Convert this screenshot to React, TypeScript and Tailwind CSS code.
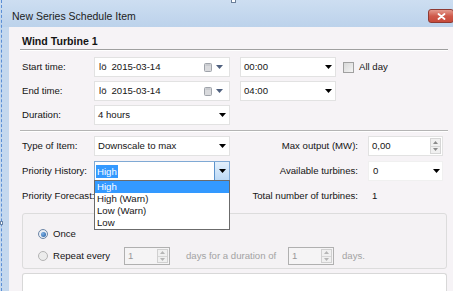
import React from "react";

function Tri({ color = "#000" }: { color?: string }) {
  return (
    <svg width="7" height="4" viewBox="0 0 7 4" className="shrink-0">
      <path d="M0 0H7L3.5 4Z" fill={color} />
    </svg>
  );
}

function TriUp({ color = "#888" }: { color?: string }) {
  return (
    <svg width="5" height="3" viewBox="0 0 5 3" className="shrink-0">
      <path d="M0 3H5L2.5 0Z" fill={color} />
    </svg>
  );
}
function TriDown({ color = "#888" }: { color?: string }) {
  return (
    <svg width="5" height="3" viewBox="0 0 5 3" className="shrink-0">
      <path d="M0 0H5L2.5 3Z" fill={color} />
    </svg>
  );
}

function CalIcon() {
  return (
    <svg width="8" height="9" viewBox="0 0 8 9" className="shrink-0">
      <rect x="0.5" y="0.5" width="7" height="8" rx="1" fill="#d9dadd" stroke="#9fa3aa" />
      <rect x="1.5" y="1.5" width="5" height="1" fill="#b9bcc2" />
    </svg>
  );
}

function Label({ children }: { children: React.ReactNode }) {
  return <div className="w-[72px] shrink-0 whitespace-nowrap">{children}</div>;
}

function Combo({ text, w, children }: { text: string; w: string; children?: React.ReactNode }) {
  return (
    <div className={`${w} h-[20px] shrink-0 bg-white border border-[#e2e2e2] flex items-center pl-[3px] pr-[3px] relative`}>
      <span className="flex-1 whitespace-nowrap">{text}</span>
      <Tri />
      {children}
    </div>
  );
}

function DateBox() {
  return (
    <div className="w-[136px] h-[20px] shrink-0 bg-white border border-[#e2e2e2] flex items-center pl-[4px] pr-[6px]">
      <span>lö</span>
      <span className="ml-[5px] flex-1">2015-03-14</span>
      <CalIcon />
      <div className="ml-[4px]">
        <Tri color="#4f607e" />
      </div>
    </div>
  );
}

function SpinButtons({ disabled }: { disabled?: boolean }) {
  const c = disabled ? "#b5b5b5" : "#8a8a8a";
  return (
    <div className={`w-[11px] self-stretch my-[1px] mr-[1px] flex flex-col border ${disabled ? "border-[#d0d0d0]" : "border-[#d6d6d6]"} bg-[#f0f0f0]`}>
      <div className="flex-1 flex items-center justify-center border-b border-[#d6d6d6]">
        <TriUp color={c} />
      </div>
      <div className="flex-1 flex items-center justify-center">
        <TriDown color={c} />
      </div>
    </div>
  );
}

function Radio({ checked }: { checked?: boolean }) {
  return (
    <div
      className={`w-[10px] h-[10px] rounded-full border shrink-0 flex items-center justify-center ${
        checked ? "border-[#6d86a6] bg-[#e9eef4]" : "border-[#b3b3b3] bg-[#ececec]"
      }`}
    >
      {checked && <div className="w-[5px] h-[5px] rounded-full bg-[radial-gradient(circle_at_35%_35%,#7fb2e6,#1f5a9e)]" />}
    </div>
  );
}

export default function App() {
  return (
    <div className="w-[453px] h-[291px] overflow-hidden relative bg-[#c4d8ee] font-['Liberation_Sans',Arial,sans-serif] text-[9.6px] text-[#141414] leading-[12px]">
      <div className="absolute left-[1px] top-0 bottom-0 border-l border-dashed border-[#5b8fd6]" />
      <div className="absolute left-[0px] top-[221px] w-[3px] h-[4px] border border-[#6b86a8] bg-white" />
      <div className="absolute left-[231px] top-0 w-[5px] h-[3px] border border-[#6b7f99] border-t-0 bg-white" />
      <div className="flex flex-col h-full">
        <div className="h-[27px] shrink-0 flex items-start bg-gradient-to-b from-[#cddef1] to-[#bcd2eb] pl-[12px]">
          <span className="pt-[10px] text-[10.5px] text-[#1c1c1c] leading-[12px]">New Series Schedule Item</span>
          <div className="ml-auto mt-[9px] -mr-[1px] w-[26px] h-[14px] rounded-[3px] border border-[#8e3a33] bg-gradient-to-b from-[#e39b8f] via-[#cf5a4b] to-[#c64a3b] flex items-center justify-center">
            <svg width="9" height="7" viewBox="0 0 9 7">
              <path d="M1.5 1L7.5 6M7.5 1L1.5 6" stroke="#fff" strokeWidth="1.8" strokeLinecap="round" />
            </svg>
          </div>
        </div>
        <div className="flex-1 flex pl-[9px]">
          <div className="flex-1 bg-[#f6f3f6] pl-[13px] pr-[6px] flex flex-col">
            <div className="pt-[8px] pb-[1px] -ml-[2px] pl-[2px] -mr-[1px] border-b border-[#9f9f9f] shadow-[0_1px_0_#ffffff]">
              <span className="font-bold text-[10.6px] leading-[12px]">Wind Turbine 1</span>
            </div>

            <div className="mt-[7px] flex flex-col gap-[4px]">
              <div className="h-[20px] flex items-center">
                <Label>Start time:</Label>
                <DateBox />
                <div className="ml-[10px]">
                  <Combo text="00:00" w="w-[96px]" />
                </div>
                <div className="ml-[7px] w-[11px] h-[11px] border border-[#a0a0a0] bg-gradient-to-br from-[#d8d8d8] to-[#f4f4f4]" />
                <span className="ml-[5px]">All day</span>
              </div>
              <div className="h-[20px] flex items-center">
                <Label>End time:</Label>
                <DateBox />
                <div className="ml-[10px]">
                  <Combo text="04:00" w="w-[96px]" />
                </div>
              </div>
              <div className="h-[20px] flex items-center">
                <Label>Duration:</Label>
                <Combo text="4 hours" w="w-[136px]" />
              </div>
            </div>

            <div className="mt-[5px] -ml-[2px] -mr-[1px] border-b border-[#b4b4b4] shadow-[0_1px_0_#ffffff]" />

            <div className="mt-[5px] flex flex-col gap-[5px]">
              <div className="h-[20px] flex items-center">
                <Label>Type of Item:</Label>
                <Combo text="Downscale to max" w="w-[136px]" />
                <div className="w-[128px] text-right whitespace-nowrap">Max output (MW):</div>
                <div className="ml-[10px] w-[75px] h-[20px] bg-white border border-[#e2e2e2] flex items-center pl-[3px]">
                  <span className="flex-1">0,00</span>
                  <SpinButtons />
                </div>
              </div>
              <div className="h-[20px] flex items-center relative z-10">
                <Label>Priority History:</Label>
                <div className="w-[136px] h-[20px] shrink-0 bg-white border border-[#7fa9d4] flex items-center pl-[1px] relative">
                  <span className="bg-[#3399ff] text-white px-[1px] leading-[13px]">High</span>
                  <div className="ml-auto w-[15px] self-stretch border-l border-[#5b93cc] bg-gradient-to-b from-[#e3f0fc] to-[#bcd9f5] flex items-center justify-center">
                    <Tri />
                  </div>
                  <div className="absolute left-[-1px] right-[-1px] top-full bg-white border border-[#6b6b6b] flex flex-col">
                    <div className="h-[12px] pl-[2px] bg-[#3399ff] text-white">High</div>
                    <div className="h-[12px] pl-[2px]">High (Warn)</div>
                    <div className="h-[12px] pl-[2px]">Low (Warn)</div>
                    <div className="h-[12px] pl-[2px]">Low</div>
                  </div>
                </div>
                <div className="w-[128px] text-right whitespace-nowrap">Available turbines:</div>
                <div className="ml-[10px] w-[75px] h-[20px] bg-white border border-[#f0f0f0] flex items-center pl-[4px] pr-[2px]">
                  <span className="flex-1">0</span>
                  <Tri />
                </div>
              </div>
              <div className="h-[20px] flex items-center">
                <Label>Priority Forecast:</Label>
                <div className="w-[136px] h-[20px] shrink-0 bg-white border border-[#e2e2e2]" />
                <div className="w-[128px] text-right whitespace-nowrap">Total number of turbines:</div>
                <div className="ml-[10px] pl-[4px]">1</div>
              </div>
            </div>

            <div className="mt-[7px] h-[56px] shrink-0 rounded-[3px] border border-[#dcdcdc] bg-[#f4f2f4] pl-[15px] pt-[10px] flex flex-col gap-[2px]">
              <div className="h-[20px] flex items-center">
                <Radio checked />
                <span className="ml-[5px]">Once</span>
              </div>
              <div className="h-[20px] flex items-center">
                <Radio />
                <span className="ml-[5px] w-[71px] shrink-0">Repeat every</span>
                <div className="w-[46px] h-[18px] shrink-0 border border-[#b0b0b0] bg-[#f5f4f5] flex items-center pl-[3px] text-[#9a9a9a]">
                  <span className="flex-1">1</span>
                  <SpinButtons disabled />
                </div>
                <span className="ml-[16px] w-[102px] shrink-0 text-[#a3a3a3] whitespace-nowrap">days for a duration of</span>
                <div className="w-[46px] h-[18px] shrink-0 border border-[#b0b0b0] bg-[#f5f4f5] flex items-center pl-[3px] text-[#9a9a9a]">
                  <span className="flex-1">1</span>
                  <SpinButtons disabled />
                </div>
                <span className="ml-[8px] text-[#a3a3a3]">days.</span>
              </div>
            </div>

            <div className="mt-[4px] flex-1 bg-white border border-[#d8d8d8] border-b-0 rounded-t-[3px]" />
          </div>
        </div>
      </div>
    </div>
  );
}
